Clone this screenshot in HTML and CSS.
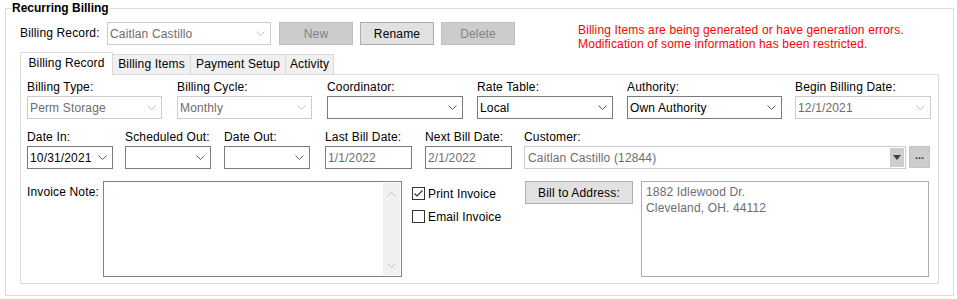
FILE: index.html
```html
<!DOCTYPE html>
<html lang="en">
<head>
    <meta charset="UTF-8">
    <title>Recurring Billing</title>
    <link rel="stylesheet" href="styles.css">
</head>
<body>
    <fieldset class="group">
        <legend>Recurring Billing</legend>

        <div class="top-row">
            <span class="top-label">Billing Record:</span>
            <div class="combo disabled w-record">
                <span>Caitlan Castillo</span>
                <svg class="chev" width="9" height="5"><path d="M0.5 0.5L4.5 4.5L8.5 0.5"/></svg>
            </div>
            <button class="btn btn-off">New</button>
            <button class="btn">Rename</button>
            <button class="btn btn-off">Delete</button>
            <p class="warning">Billing Items are being generated or have generation errors.<br>Modification of some information has been restricted.</p>
        </div>

        <div class="tabs">
            <div class="tab tab-active t1">Billing Record</div>
            <div class="tab t2">Billing Items</div>
            <div class="tab t3">Payment Setup</div>
            <div class="tab t4">Activity</div>
        </div>

        <div class="tab-panel">
            <!-- first line of fields -->
            <div class="row row-1">
                <div class="field">
                    <label>Billing Type:</label>
                    <div class="combo disabled w135">
                        <span>Perm Storage</span>
                        <svg class="chev" width="9" height="5"><path d="M0.5 0.5L4.5 4.5L8.5 0.5"/></svg>
                    </div>
                </div>
                <div class="field">
                    <label>Billing Cycle:</label>
                    <div class="combo disabled w135">
                        <span>Monthly</span>
                        <svg class="chev" width="9" height="5"><path d="M0.5 0.5L4.5 4.5L8.5 0.5"/></svg>
                    </div>
                </div>
                <div class="field">
                    <label>Coordinator:</label>
                    <div class="combo w136">
                        <span></span>
                        <svg class="chev" width="9" height="5"><path d="M0.5 0.5L4.5 4.5L8.5 0.5"/></svg>
                    </div>
                </div>
                <div class="field">
                    <label>Rate Table:</label>
                    <div class="combo w136">
                        <span>Local</span>
                        <svg class="chev" width="9" height="5"><path d="M0.5 0.5L4.5 4.5L8.5 0.5"/></svg>
                    </div>
                </div>
                <div class="field">
                    <label>Authority:</label>
                    <div class="combo w155">
                        <span>Own Authority</span>
                        <svg class="chev" width="9" height="5"><path d="M0.5 0.5L4.5 4.5L8.5 0.5"/></svg>
                    </div>
                </div>
                <div class="field">
                    <label>Begin Billing Date:</label>
                    <div class="combo disabled w136">
                        <span>12/1/2021</span>
                        <svg class="chev" width="9" height="5"><path d="M0.5 0.5L4.5 4.5L8.5 0.5"/></svg>
                    </div>
                </div>
            </div>

            <!-- second line of fields -->
            <div class="row row-2">
                <div class="field">
                    <label>Date In:</label>
                    <div class="combo w86">
                        <span>10/31/2021</span>
                        <svg class="chev" width="9" height="5"><path d="M0.5 0.5L4.5 4.5L8.5 0.5"/></svg>
                    </div>
                </div>
                <div class="field">
                    <label>Scheduled Out:</label>
                    <div class="combo w86">
                        <span></span>
                        <svg class="chev" width="9" height="5"><path d="M0.5 0.5L4.5 4.5L8.5 0.5"/></svg>
                    </div>
                </div>
                <div class="field">
                    <label>Date Out:</label>
                    <div class="combo w86">
                        <span></span>
                        <svg class="chev" width="9" height="5"><path d="M0.5 0.5L4.5 4.5L8.5 0.5"/></svg>
                    </div>
                </div>
                <div class="field">
                    <label>Last Bill Date:</label>
                    <div class="textbox readonly w87">1/1/2022</div>
                </div>
                <div class="field">
                    <label>Next Bill Date:</label>
                    <div class="textbox readonly w87">2/1/2022</div>
                </div>
                <div class="field">
                    <label>Customer:</label>
                    <div class="customer-line">
                        <div class="customer-box">
                            <span>Caitlan Castillo (12844)</span>
                            <span class="drop-btn"><svg width="8" height="5"><path d="M0 0H8L4 5Z"/></svg></span>
                        </div>
                        <button class="btn-more">...</button>
                    </div>
                </div>
            </div>

            <!-- note, options and address -->
            <div class="row row-3">
                <label class="note-label">Invoice Note:</label>
                <div class="note">
                    <div class="note-text"></div>
                    <div class="scrollbar">
                        <svg width="9" height="5"><path d="M0.5 4.5L4.5 0.5L8.5 4.5"/></svg>
                        <svg width="9" height="5"><path d="M0.5 0.5L4.5 4.5L8.5 0.5"/></svg>
                    </div>
                </div>
                <div class="checks">
                    <div class="check">
                        <svg width="13" height="13"><rect x="0.5" y="0.5" width="12" height="12" class="box"/><path d="M2.5 6.5L5 9L10.5 3.5" class="mark"/></svg>
                        <span>Print Invoice</span>
                    </div>
                    <div class="check">
                        <svg width="13" height="13"><rect x="0.5" y="0.5" width="12" height="12" class="box"/></svg>
                        <span>Email Invoice</span>
                    </div>
                </div>
                <button class="btn btn-address">Bill to Address:</button>
                <div class="address">1882 Idlewood Dr.<br>Cleveland, OH. 44112</div>
            </div>
        </div>
    </fieldset>
</body>
</html>
```

FILE: styles.css
```css
body {
    margin: 0;
    font-family: 'Liberation Sans', Arial, sans-serif;
    font-size: 12px;
    letter-spacing: 0.15px;
    color: #000;
    background: #fff;
}
.group {
    margin: 1px 3px 0 5px;
    padding: 7px 14px 11px;
    border: 1px solid #dcdcdc;
    min-width: 0;
}
.group legend {
    font-weight: bold;
    line-height: 14px;
    padding: 0 1px;
    margin-left: -9px;
    letter-spacing: 0;
}

/* top bar */
.top-row {
    display: flex;
    align-items: flex-start;
    height: 23px;
}
.top-label {
    width: 87px;
    line-height: 23px;
}
.w-record { width: 164px; }
.btn {
    box-sizing: border-box;
    height: 23px;
    width: 74px;
    margin-left: 8px;
    padding: 0;
    border: 1px solid #adadad;
    background: #e1e1e1;
    font-family: inherit;
    font-size: 12px;
    letter-spacing: 0.15px;
    color: #000;
}
.btn + .btn { margin-left: 7px; }
.btn-off {
    background: #cccccc;
    border-color: #bfbfbf;
    color: #838383;
}
.warning {
    margin: 1px 0 0 63px;
    line-height: 14px;
    color: #ff0000;
}

/* tabs */
.tabs {
    display: flex;
    align-items: flex-end;
    height: 22px;
    margin-top: 7px;
}
.tab {
    box-sizing: border-box;
    height: 20px;
    margin-left: -1px;
    border: 1px solid #d9d9d9;
    border-bottom: none;
    background: #f0f0f0;
    text-align: center;
    line-height: 19px;
}
.tab-active {
    position: relative;
    z-index: 1;
    height: 23px;
    margin-bottom: -1px;
    margin-left: 0;
    background: #fff;
    line-height: 20px;
}
.t1 { width: 93px; }
.t2 { width: 79px; }
.t3 { width: 96px; }
.t4 { width: 49px; }
.tab-panel {
    border: 1px solid #dcdcdc;
    padding: 5px 6px 6px;
}

/* fields */
.row-1 {
    display: grid;
    grid-template-columns: 150px 150px 150px 150px 168px 136px;
}
.row-2 {
    display: grid;
    grid-template-columns: 98px 99px 101px 100px 99px auto;
    margin-top: 11px;
}
.field label {
    display: block;
    line-height: 14px;
    margin-bottom: 2px;
}
.combo, .textbox {
    box-sizing: border-box;
    height: 23px;
    border: 1px solid #7a7a7a;
    background: #fff;
    padding: 0 5px 0 2px;
    display: flex;
    align-items: center;
    justify-content: space-between;
    white-space: nowrap;
}
.chev path {
    fill: none;
    stroke: #606060;
    stroke-width: 1;
}
.disabled {
    border-color: #cccccc;
    color: #6d6d6d;
}
.disabled .chev path { stroke: #c4c4c4; }
.readonly { color: #6d6d6d; }
.w86 { width: 86px; }
.w87 { width: 87px; }
.w135 { width: 135px; }
.w136 { width: 136px; }
.w155 { width: 155px; }

.customer-line {
    display: flex;
    align-items: flex-start;
}
.customer-box {
    box-sizing: border-box;
    width: 382px;
    height: 23px;
    border: 1px solid #cccccc;
    padding: 1px 1px 1px 3px;
    display: flex;
    justify-content: space-between;
    align-items: center;
    color: #6d6d6d;
}
.drop-btn {
    width: 14px;
    height: 19px;
    background: #cdcdcd;
    display: flex;
    align-items: center;
    justify-content: center;
}
.drop-btn path { fill: #404040; }
.btn-more {
    box-sizing: border-box;
    width: 21px;
    height: 22px;
    margin-left: 3px;
    padding: 0 0 4px;
    border: 1px solid #c4c4c4;
    background: #cdcdcd;
    font-family: inherit;
    font-size: 11px;
    font-weight: bold;
    color: #333;
    line-height: 10px;
}

/* note / address */
.row-3 {
    display: flex;
    align-items: flex-start;
    margin-top: 12px;
}
.note-label {
    width: 76px;
    margin-top: 4px;
    line-height: 14px;
}
.note {
    box-sizing: border-box;
    width: 299px;
    height: 96px;
    border: 1px solid #828282;
    display: flex;
    padding: 1px;
}
.note-text { flex: 1; }
.scrollbar {
    width: 17px;
    background: #f0f0f0;
    display: flex;
    flex-direction: column;
    justify-content: space-between;
    align-items: center;
    padding: 9px 0 7px;
    box-sizing: border-box;
}
.scrollbar path {
    fill: none;
    stroke: #c2c2c2;
}
.checks {
    width: 113px;
    margin-left: 10px;
    margin-top: 6px;
}
.check {
    display: flex;
    align-items: center;
    height: 13px;
    margin-bottom: 10px;
}
.check svg { margin-right: 3px; }
.check .box {
    fill: #fff;
    stroke: #333;
}
.check .mark {
    fill: none;
    stroke: #333;
    stroke-width: 1.2;
}
.btn-address {
    width: 108px;
    margin-left: 0;
}
.address {
    box-sizing: border-box;
    width: 288px;
    height: 96px;
    margin-left: 8px;
    border: 1px solid #adadad;
    padding: 2px 4px;
    line-height: 16px;
    color: #6d6d6d;
}
```
